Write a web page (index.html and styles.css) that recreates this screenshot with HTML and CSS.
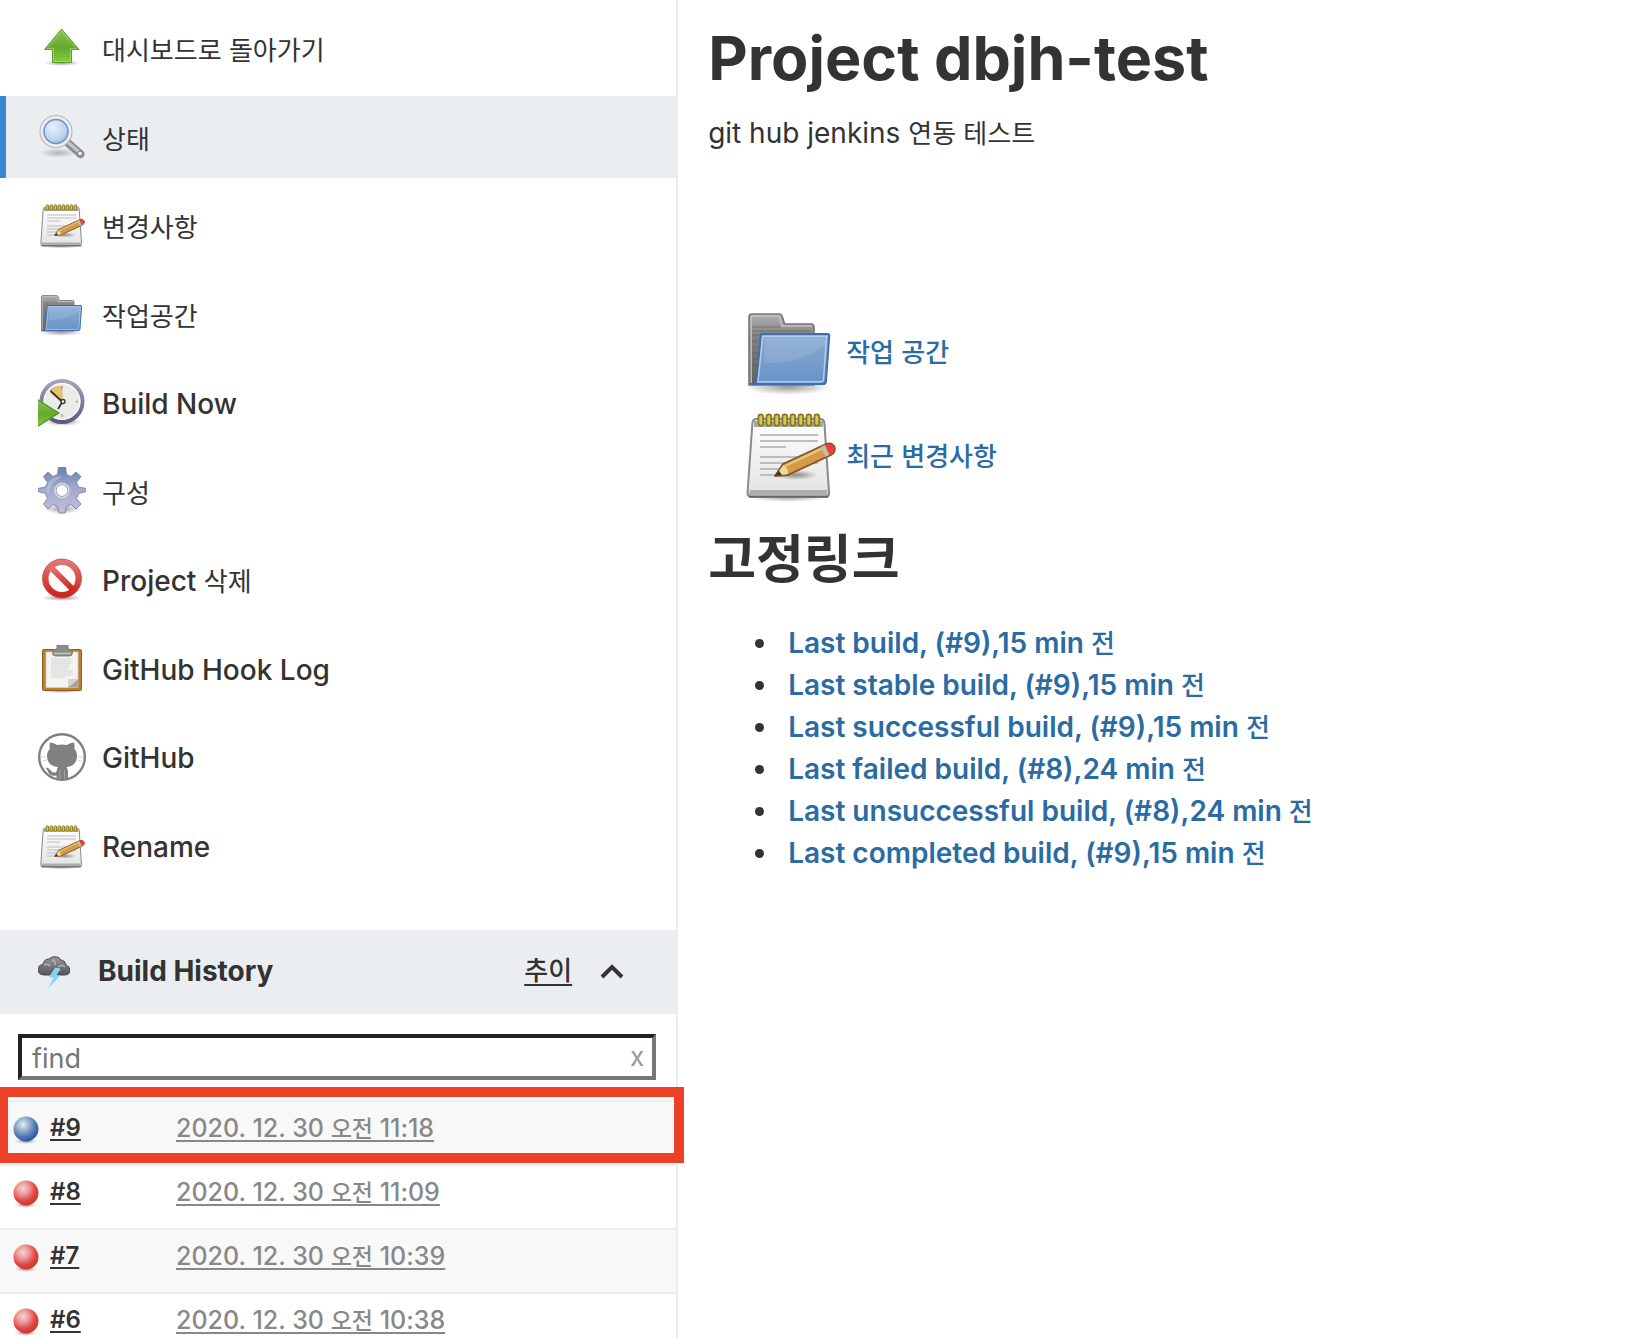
FILE: index.html
```html
<!DOCTYPE html>
<html lang="ko">
<head>
  <meta charset="utf-8">
  <title>dbjh-test [Jenkins]</title>
  <link rel="stylesheet" href="styles.css">
</head>
<body>
  <!-- shared icons -->
  <svg class="defs" width="0" height="0" aria-hidden="true">
    <defs>
      <linearGradient id="green" x1="0" y1="0" x2="0" y2="1">
        <stop offset="0" stop-color="#8cc45c"/><stop offset=".55" stop-color="#65a92c"/><stop offset="1" stop-color="#83d035"/>
      </linearGradient>
      <linearGradient id="tab" x1="0" y1="0" x2="0" y2="1">
        <stop offset="0" stop-color="#b0b0b0"/><stop offset=".3" stop-color="#848484"/><stop offset="1" stop-color="#606060"/>
      </linearGradient>
      <linearGradient id="blue" x1="0" y1="0" x2="0" y2="1">
        <stop offset="0" stop-color="#8badd6"/><stop offset=".6" stop-color="#769cca"/><stop offset="1" stop-color="#6593cd"/>
      </linearGradient>
      <linearGradient id="paper" x1="0" y1="0" x2="0" y2="1">
        <stop offset="0" stop-color="#ffffff"/><stop offset="1" stop-color="#e2e2e2"/>
      </linearGradient>
      <linearGradient id="gear" x1="0" y1="0" x2="0" y2="1">
        <stop offset="0" stop-color="#6480b0"/><stop offset=".45" stop-color="#a0aacd"/><stop offset="1" stop-color="#c6bedd"/>
      </linearGradient>
      <linearGradient id="stop" x1="0" y1="0" x2="0" y2="1">
        <stop offset="0" stop-color="#e27672"/><stop offset="1" stop-color="#c92620"/>
      </linearGradient>
      <linearGradient id="ring" x1="0" y1="0" x2="0" y2="1">
        <stop offset="0" stop-color="#a3a3b8"/><stop offset="1" stop-color="#5d5985"/>
      </linearGradient>
      <linearGradient id="cloud" x1="0" y1="0" x2="0" y2="1">
        <stop offset="0" stop-color="#9a9a9c"/><stop offset="1" stop-color="#555558"/>
      </linearGradient>
      <radialGradient id="lens" cx=".4" cy=".35" r=".7">
        <stop offset="0" stop-color="#e6effb"/><stop offset=".65" stop-color="#bed3ee"/><stop offset="1" stop-color="#86aadb"/>
      </radialGradient>
      <radialGradient id="shade">
        <stop offset="0" stop-color="#000" stop-opacity=".4"/><stop offset="1" stop-color="#000" stop-opacity="0"/>
      </radialGradient>
      <radialGradient id="ball-blue" cx=".38" cy=".32" r=".7">
        <stop offset="0" stop-color="#e9efe2"/><stop offset=".3" stop-color="#a3bbda"/><stop offset=".7" stop-color="#5078b5"/><stop offset="1" stop-color="#2f5797"/>
      </radialGradient>
      <radialGradient id="ball-red" cx=".38" cy=".32" r=".7">
        <stop offset="0" stop-color="#f8d5d5"/><stop offset=".35" stop-color="#ee9a99"/><stop offset=".7" stop-color="#e24742"/><stop offset="1" stop-color="#c43832"/>
      </radialGradient>
    </defs>

    <symbol id="icon-folder" viewBox="0 0 48 48">
      <ellipse cx="23" cy="42" rx="22" ry="4" fill="url(#shade)"/>
      <path d="M3.500 41V7Q3.500 5.500 5 5.500H18.500Q19.800 5.500 20.200 7L21.300 10.500H34.500Q36 10.500 36 12V41Z" fill="url(#tab)" stroke="#777" stroke-width=".8"/>
      <path d="M4.600 40V7.500Q4.600 6.500 5.600 6.500H18.500L20 11.500H35" fill="none" stroke="#c4c4c4" stroke-width=".7"/>
      <path d="M5 12h14M5 14h29M5 16h29M5 19h3M5 22h3M5 25h3M5 28h3M5 31h3M5 34h3" stroke="#555" stroke-opacity=".35" stroke-width=".7"/>
      <path d="M9.500 15.500H43Q43.700 15.500 43.600 16.500L42 39Q41.800 40.500 40.500 40.500H5.500Q7 40.500 7.300 38.500Z" fill="url(#blue)" stroke="#416eaf" stroke-linejoin="round"/>
      <path d="M10.300 16.700H42.300L40.700 38.500Q40.500 39.400 39.500 39.400H8Z" fill="none" stroke="#b6cdea" stroke-width=".7"/>
      <path d="M11 30Q28 31 41.500 21V17.500H11.500Z" fill="#fff" fill-opacity=".1"/>
    </symbol>

    <symbol id="icon-notepad" viewBox="0 0 48 48">
      <ellipse cx="23" cy="45" rx="19" ry="2.500" fill="url(#shade)"/>
      <path d="M7.500 6H39Q41 6 41.200 8L43.500 42.500Q43.700 45 42 45H4.500Q2.700 45 2.800 42.500L5.200 8Q5.400 6 7.500 6Z" fill="url(#paper)" stroke="#8a8a8a"/>
      <path d="M6 7H40.500V10H6Z" fill="#a9a9a4"/>
      <path d="M3.800 41.500H42.500L42.800 44H3.600Z" fill="#aeaeae"/>
      <path d="M3.500 44.700H43" stroke="#666"/>
      <path d="M9 14h29M9 17h29M9 20h13M9 25h29M9 28h29M9 31h20M9 34h15" stroke="#bdbdbd"/>
      <g fill="#d9c84d" stroke="#8a7a1c" stroke-width=".9">
        <rect x="8.200" y="3.700" width="2.400" height="5.600" rx="1.200"/><rect x="12.200" y="3.700" width="2.400" height="5.600" rx="1.200"/>
        <rect x="16.200" y="3.700" width="2.400" height="5.600" rx="1.200"/><rect x="20.200" y="3.700" width="2.400" height="5.600" rx="1.200"/>
        <rect x="24.200" y="3.700" width="2.400" height="5.600" rx="1.200"/><rect x="28.200" y="3.700" width="2.400" height="5.600" rx="1.200"/>
        <rect x="32.200" y="3.700" width="2.400" height="5.600" rx="1.200"/><rect x="36.200" y="3.700" width="2.400" height="5.600" rx="1.200"/>
      </g>
      <ellipse cx="27" cy="34" rx="11" ry="2.500" fill="url(#shade)"/>
      <path d="M16.500 34.500 20.500 28.500 42 18.500Q45 17.600 46.300 20Q47 22.500 44.500 24L23 34Z" fill="#d49a45" stroke="#7c5524" stroke-width=".9" stroke-linejoin="round"/>
      <path d="M21.500 29.500 42 19.800" stroke="#ecc27c" stroke-width="1.200"/>
      <path d="M16.800 34.300 20.700 29Q23.300 30.500 23 33.600Z" fill="#ecd9a0"/>
      <path d="M16.500 34.500 18.300 31.800 20 34Z" fill="#41351f"/>
      <path d="M39.400 20 41.500 19 43.600 24 41.800 25Z" fill="#c4bbb9"/>
      <path d="M41.500 19Q45 17.600 46.200 20.200Q46.500 22.500 43.700 24Z" fill="#e84138"/>
    </symbol>

    <symbol id="ball-ok" viewBox="0 0 28 28">
      <ellipse cx="14" cy="25" rx="11" ry="3" fill="url(#shade)"/>
      <circle cx="14" cy="13" r="12.500" fill="url(#ball-blue)"/>
    </symbol>
    <symbol id="ball-fail" viewBox="0 0 28 28">
      <ellipse cx="14" cy="25" rx="11" ry="3" fill="url(#shade)"/>
      <circle cx="14" cy="13" r="12.500" fill="url(#ball-red)"/>
    </symbol>
  </svg>

  <div class="page">
    <aside class="side-panel">
      <nav class="tasks">
        <a class="task" href="#">
          <svg class="task-icon" viewBox="0 0 48 48">
            <ellipse cx="24" cy="39" rx="18" ry="3" fill="url(#shade)"/>
            <path d="M23.500 5 41 25.500H33.500V38.500H14.500V25.500H6.500Z" fill="url(#green)" stroke="#5c9d2c" stroke-linejoin="round"/>
            <path d="M23.500 7 38.500 24.500H32.500V37.500H15.500V24.500H9Z" fill="none" stroke="#a6dc79" stroke-opacity=".7"/>
          </svg>
          <span class="ko">대시보드로 돌아가기</span>
        </a>
        <a class="task active" href="#">
          <svg class="task-icon" viewBox="0 0 48 48">
            <ellipse cx="20" cy="40" rx="18" ry="5" fill="url(#shade)" opacity=".6"/>
            <path d="M29 29 42.500 41" stroke="#8d8d8d" stroke-width="8" stroke-linecap="round"/>
            <path d="M29 28.500 41 39" stroke="#c6c6c6" stroke-width="3" stroke-linecap="round"/>
            <circle cx="42" cy="40.500" r="2.500" fill="#ededed" stroke="#777"/>
            <circle cx="18" cy="18.500" r="14" fill="url(#lens)" stroke="#b4b4b4" stroke-width="5"/>
            <circle cx="18" cy="18.500" r="14" fill="none" stroke="#ededed" stroke-width="3"/>
            <circle cx="18" cy="18.500" r="12" fill="none" stroke="#6f97cd" stroke-width="1.500"/>
          </svg>
          <span class="ko">상태</span>
        </a>
        <a class="task" href="#">
          <svg class="task-icon"><use href="#icon-notepad"/></svg>
          <span class="ko">변경사항</span>
        </a>
        <a class="task" href="#">
          <svg class="task-icon"><use href="#icon-folder"/></svg>
          <span class="ko">작업공간</span>
        </a>
        <a class="task" href="#">
          <svg class="task-icon" viewBox="0 0 48 48">
            <ellipse cx="25" cy="43" rx="19" ry="4" fill="url(#shade)"/>
            <circle cx="24" cy="22.500" r="20.500" fill="#ebebe8" stroke="url(#ring)" stroke-width="4"/>
            <circle cx="24" cy="22.500" r="18" fill="none" stroke="#fff"/>
            <path d="M24 22 12 11Q17 7 24 7.500Z" fill="#e6c36c" stroke="#c7a04c" stroke-width=".6"/>
            <path d="M12.500 12 24 22.500M20 30 24 23.500" fill="none" stroke="#333" stroke-width="1.800"/>
            <circle cx="25" cy="22.500" r="2" fill="#f4f4f4" stroke="#333" stroke-width="1.300"/>
            <path d="M24 7v3M37.500 22.500h2.500M24 35v3" stroke="#aaa" stroke-width="1.500"/>
            <path d="M0 20 22 34 0 48Z" fill="url(#green)"/>
            <path d="M0 21 20.500 34 0 47" fill="none" stroke="#478c1d"/>
          </svg>
          <span>Build Now</span>
        </a>
        <a class="task" href="#">
          <svg class="task-icon" viewBox="0 0 48 48">
            <ellipse cx="24" cy="42" rx="18" ry="5" fill="url(#shade)"/>
            <path fill-rule="evenodd" d="M20.500 0H27.500L28.500 7.500 33 9.500 38 5 43 9.500 38.500 15.500 40.500 20 48 21.500V24.500L40.500 26.500 38.500 31.500 43 37 38 42 33 37.500 28.500 39.500 27 46H21L19.500 39.500 15 37.500 10 42 5.500 37 9.500 31.500 7.500 26.500 0 24.500V21.500L7.500 20 9.500 15.500 5.500 9.500 10 5 15 9.500 19.500 7.500ZM24 17.500A6 6 0 1 0 24 29.500A6 6 0 1 0 24 17.500Z" fill="url(#gear)" stroke="#8088ad"/>
            <circle cx="24" cy="23.500" r="7" fill="none" stroke="#d9dbe9" stroke-width="1.500"/>
            <path d="M10 28Q12 14 23 11V9Q12 9 9 20Z" fill="#fff" fill-opacity=".25"/>
          </svg>
          <span class="ko">구성</span>
        </a>
        <a class="task" href="#">
          <svg class="task-icon" viewBox="0 0 48 48">
            <ellipse cx="24" cy="42" rx="21" ry="3" fill="url(#shade)"/>
            <circle cx="24" cy="22.500" r="16.500" fill="#fff" stroke="url(#stop)" stroke-width="6"/>
            <path d="M12.500 11 35.500 34" stroke="url(#stop)" stroke-width="6"/>
            <circle cx="24" cy="22.500" r="19.500" fill="none" stroke="#d04a45" stroke-width=".8"/>
          </svg>
          <span>Project <span class="ko">삭제</span></span>
        </a>
        <a class="task" href="#">
          <svg class="task-icon" viewBox="0 0 48 48">
            <ellipse cx="24" cy="46" rx="20" ry="2" fill="url(#shade)"/>
            <rect x="4.500" y="4.500" width="39" height="41" rx="1" fill="#b97f32" stroke="#8d5f22"/>
            <path d="M8 7H40V42.500H8Z" fill="#f3f3f1" stroke="#cfcfcf" stroke-width=".8"/>
            <path d="M13 14h20M13 16h22M13 18h20M13 20h18M13 22h18M13 24h17M13 26h22M13 28h22M13 30h20M13 32h14" stroke="#d6d6d4"/>
            <path d="M30 42.500V34.500H40V42.500Z" fill="#a3a49d"/>
            <path d="M30 34.500H40L30 42.500Z" fill="#d5d5d2"/>
            <path d="M19 0H30V4Q34.500 4 34.500 8Q34.500 11 31 11H17.500Q14.500 11 14.500 8Q14.500 4 19 4Z" fill="#8c8f83" stroke="#73766b" stroke-width=".8"/>
            <path d="M16 8.500H33" stroke="#c5c8bd" stroke-width="1.500"/>
          </svg>
          <span>GitHub Hook Log</span>
        </a>
        <a class="task" href="#">
          <svg class="task-icon" viewBox="0 0 48 48">
            <circle cx="24" cy="24" r="22.800" fill="#fff" stroke="#808080" stroke-width="2.400"/>
            <path d="M12 9.500Q16 9.500 19 12Q24 11 29 12Q32 9.500 36 9.500Q37 13 36.300 15.500Q39 18.500 39 22.500Q39 33 28.500 34Q30 36 30 39V46.500Q24 48 18.500 46.500V42.500Q12.500 43.500 10.500 39.500Q9.500 37 8 35.500Q7.500 34.500 9.500 34.800Q11.500 35.500 13 38Q15 40.500 18.500 39Q18.500 36 20 34Q9 33 9 22.500Q9 18.500 12 15.500Q11 13 12 9.500Z" fill="#808080"/>
            <path d="M22 37v9M26.500 37v9" stroke="#a2a2a2"/>
            <path d="M3 24h5M4 28l5-1M40 24h5M39 27l5 1" stroke="#ccc" stroke-width=".8"/>
          </svg>
          <span>GitHub</span>
        </a>
        <a class="task" href="#">
          <svg class="task-icon"><use href="#icon-notepad"/></svg>
          <span>Rename</span>
        </a>
      </nav>

      <section class="history">
        <header class="history-header">
          <svg class="history-icon" viewBox="0 0 32 32">
            <path d="M7 19Q0 19 0 13.500Q0 9 5 8.500Q6 3 11 3Q14 0 18 .8Q21.500 1 23 4Q27.500 4.500 28 9Q32 10.500 32 14.500Q32 19 26 19Z" fill="url(#cloud)" stroke="#4a4a4d"/>
            <path d="M6 9Q10 7 12 10M14 4Q18 5 17 9M20 11Q24 8 27 11" fill="none" stroke="#b5b5b8" stroke-width="1.500"/>
            <path d="M17.500 12 11 21.500H15.500L10.500 32 22 20H17.500L22 13Z" fill="#7fd3f8" stroke="#b5e6fb" stroke-width=".7"/>
          </svg>
          <h2 class="history-title">Build History</h2>
          <a class="trend ko" href="#">추이</a>
          <button class="collapse" type="button" aria-label="접기">
            <svg width="24" height="16" viewBox="0 0 24 16"><path d="M2 13 12 3 22 13" fill="none" stroke="#333" stroke-width="4"/></svg>
          </button>
        </header>

        <div class="search">
          <input class="search-input" type="text" placeholder="find" aria-label="find">
          <button class="clear" type="button">x</button>
        </div>

        <table class="builds">
          <tbody>
            <tr class="build marked">
              <td class="status"><svg class="ball"><use href="#ball-ok"/></svg></td>
              <td class="number"><a href="#">#9</a></td>
              <td class="date"><a href="#">2020. 12. 30 <span class="ko">오전</span> 11:18</a></td>
            </tr>
            <tr class="build">
              <td class="status"><svg class="ball"><use href="#ball-fail"/></svg></td>
              <td class="number"><a href="#">#8</a></td>
              <td class="date"><a href="#">2020. 12. 30 <span class="ko">오전</span> 11:09</a></td>
            </tr>
            <tr class="build">
              <td class="status"><svg class="ball"><use href="#ball-fail"/></svg></td>
              <td class="number"><a href="#">#7</a></td>
              <td class="date"><a href="#">2020. 12. 30 <span class="ko">오전</span> 10:39</a></td>
            </tr>
            <tr class="build">
              <td class="status"><svg class="ball"><use href="#ball-fail"/></svg></td>
              <td class="number"><a href="#">#6</a></td>
              <td class="date"><a href="#">2020. 12. 30 <span class="ko">오전</span> 10:38</a></td>
            </tr>
          </tbody>
        </table>
      </section>
    </aside>

    <main class="main-panel">
      <h1>Project dbjh-test</h1>
      <p class="description">git hub jenkins <span class="ko">연동 테스트</span></p>

      <div class="shortcuts">
        <a class="shortcut" href="#">
          <svg class="shortcut-icon"><use href="#icon-folder"/></svg>
          <span class="ko">작업 공간</span>
        </a>
        <a class="shortcut" href="#">
          <svg class="shortcut-icon"><use href="#icon-notepad"/></svg>
          <span class="ko">최근 변경사항</span>
        </a>
      </div>

      <h2 class="permalinks-title">고정링크</h2>
      <ul class="permalinks">
        <li><a href="#">Last build, (#9),15 min <span class="ko">전</span></a></li>
        <li><a href="#">Last stable build, (#9),15 min <span class="ko">전</span></a></li>
        <li><a href="#">Last successful build, (#9),15 min <span class="ko">전</span></a></li>
        <li><a href="#">Last failed build, (#8),24 min <span class="ko">전</span></a></li>
        <li><a href="#">Last unsuccessful build, (#8),24 min <span class="ko">전</span></a></li>
        <li><a href="#">Last completed build, (#9),15 min <span class="ko">전</span></a></li>
      </ul>
    </main>
  </div>
</body>
</html>
```
FILE: styles.css
```css
* {
  box-sizing: border-box;
}

body {
  margin: 0;
  font-family: Inter, "Noto Sans CJK KR", sans-serif;
  font-size: 28px;
  line-height: 42px;
  color: #333;
  background-color: #fff;
}

a {
  color: inherit;
}

button {
  padding: 0;
  border: none;
  background: none;
  font-family: inherit;
  cursor: pointer;
}

.defs {
  position: absolute;
}

.ko {
  font-family: "Noto Sans CJK KR", sans-serif;
  font-size: 26px;
  line-height: 1;
}

.page {
  display: flex;
  height: 100vh;
  overflow: hidden;
}

/* side panel */
.side-panel {
  flex: none;
  width: 41.4%;
  border-right: 2px solid #eaeef1;
}

.tasks {
  display: flex;
  flex-direction: column;
  justify-content: space-between;
  min-height: 880px;
  margin: 7px 0 43px;
}

.task {
  display: flex;
  align-items: center;
  gap: 16px;
  height: 82px;
  padding-left: 38px;
  font-weight: 500;
  text-decoration: none;
}

.task > span {
  padding-top: 2px;
}

.task .ko {
  font-weight: 400;
}

.task.active {
  padding-left: 32px;
  border-left: 6px solid #3a87d2;
  background-color: #eaeef1;
}

.task-icon {
  flex: none;
  width: 48px;
  height: 48px;
}

/* build history */
.history-header {
  display: flex;
  align-items: center;
  height: 84px;
  padding: 0 52px 0 38px;
  background-color: #eaeef1;
}

.history-icon {
  width: 32px;
  height: 32px;
}

.history-title {
  flex: 1;
  margin: 0 0 2px 28px;
  font-size: 28px;
  font-weight: 700;
}

.trend {
  margin: 0 28px 6px 0;
  font-weight: 500;
  text-underline-offset: 4px;
}

.collapse {
  display: flex;
}

.search {
  position: relative;
  margin: 20px 20px 20px 18px;
}

.search-input {
  display: block;
  width: 100%;
  height: 46px;
  padding: 2px 40px 0 10px;
  border: 4px solid;
  border-color: #222 #767676 #767676 #222;
  font-family: inherit;
  font-size: 27px;
}

.search-input::placeholder {
  color: #757575;
}

.clear {
  position: absolute;
  top: 4px;
  right: 12px;
  font-size: 26px;
  line-height: 38px;
  color: #999;
}

.builds {
  width: 100%;
  border-collapse: collapse;
  font-size: 24px;
  line-height: 32px;
}

.build {
  position: relative;
  height: 64px;
  border-top: 2px solid #eaeef1;
}

.build:nth-child(odd) {
  background-color: #f8f8f8;
}

.build td {
  padding: 10px 0 0;
  vertical-align: top;
}

.build .status {
  width: 50px;
  padding: 14px 0 0 12px;
}

.build .number {
  width: 126px;
  font-weight: 600;
}

.build .date {
  font-size: 25px;
  font-weight: 500;
  color: #888;
}

.build a {
  text-decoration-thickness: 2px;
  text-underline-offset: 3px;
}

.build .ko {
  font-size: 23px;
}

.ball {
  display: block;
  width: 28px;
  height: 28px;
}

/* red frame over the highlighted build */
.marked::after {
  content: "";
  position: absolute;
  top: -16px;
  right: -8px;
  bottom: 2px;
  left: -2px;
  border: 10px solid #ec4027;
}

/* main panel */
.main-panel {
  flex: 1;
  padding: 20px 30px;
}

h1 {
  margin: 0;
  font-size: 61px;
  font-weight: 700;
  line-height: 76px;
}

.description {
  margin: 16px 0 0;
}

.shortcuts {
  display: flex;
  flex-direction: column;
  align-items: flex-start;
  gap: 8px;
  margin: 149px 0 0 34px;
}

.shortcut {
  display: flex;
  align-items: center;
  gap: 8px;
  font-weight: 500;
  color: #2a6ba3;
  text-decoration: none;
}

.shortcut-icon {
  width: 96px;
  height: 96px;
}

.permalinks-title {
  margin: 18px 0 31px;
  font-family: "Noto Sans CJK KR", sans-serif;
  font-size: 52px;
  font-weight: 700;
  line-height: 70px;
}

.permalinks {
  margin: 0;
  padding-left: 72px;
}

.permalinks li {
  padding-left: 8px;
}

.permalinks a {
  font-weight: 600;
  color: #2a6ba3;
  text-decoration: none;
}

.permalinks .ko {
  font-weight: 500;
}
```
